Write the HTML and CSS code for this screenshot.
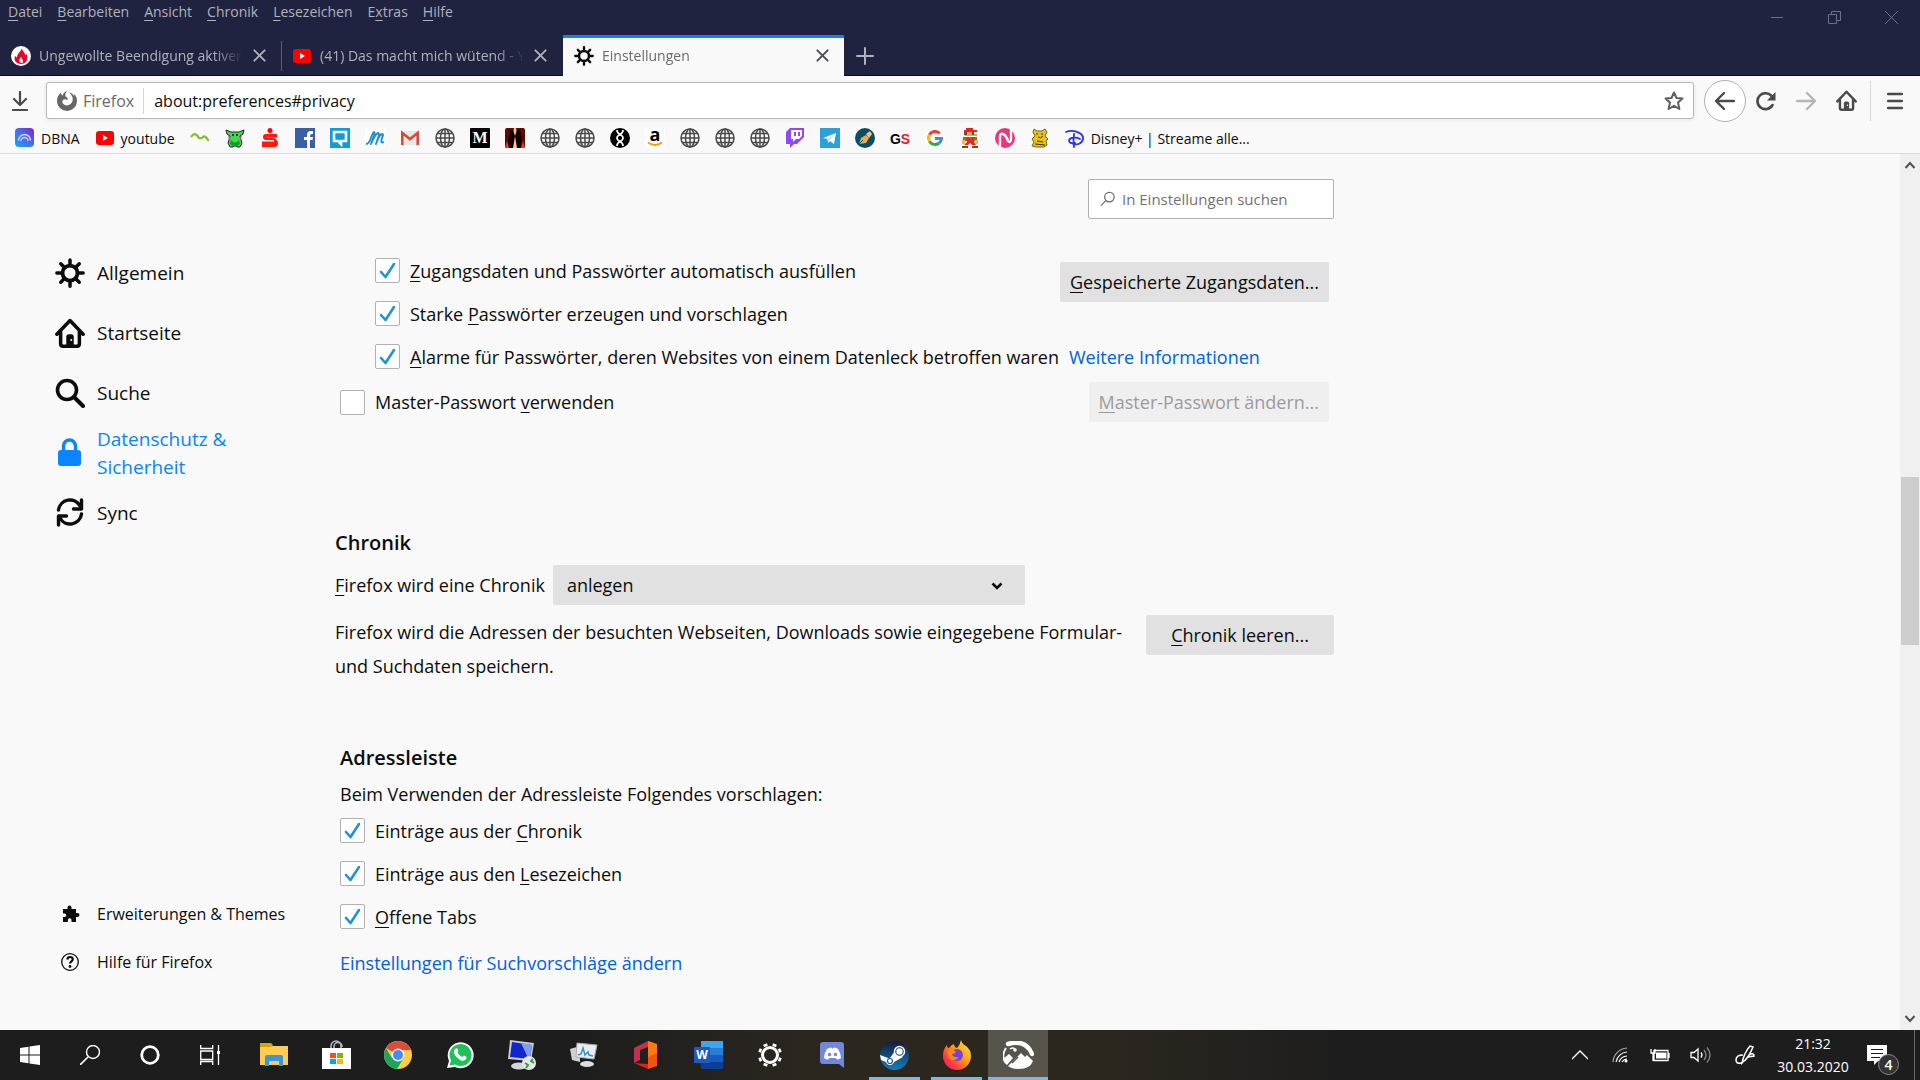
FILE: index.html
```html
<!DOCTYPE html>
<html lang="de">
<head>
    <meta charset="UTF-8">
    <meta name="viewport" content="width=device-width, initial-scale=1.0">
    <title>Einstellungen</title>
    <link rel="stylesheet" href="styles.css">
</head>
<body>

    <!-- Shared icons -->
    <svg class="sprite" width="0" height="0">
        <symbol id="gear" viewBox="0 0 24 24">
            <circle cx="12" cy="12" r="6" fill="none" stroke="currentColor" stroke-width="3"/>
            <path d="M12 1.500V6M12 18v4.500M1.500 12H6M18 12h4.500M4.600 4.600l3 3M16.400 16.400l3 3M19.400 4.600l-3 3M7.600 16.400l-3 3" stroke="currentColor" stroke-width="2.800" stroke-linecap="round"/>
        </symbol>
        <symbol id="house" viewBox="0 0 24 24">
            <path d="M1.500 13L12 2l10.500 11M4.500 11v9.500q0 2 2 2h11q2 0 2-2V11" fill="none" stroke="currentColor" stroke-width="2.800" stroke-linecap="round" stroke-linejoin="round"/>
            <path d="M9 22v-7q0-2 2-2h2q2 0 2 2v7z" fill="currentColor"/>
            <circle cx="13" cy="17.500" r=".8" fill="#fff"/>
        </symbol>
        <symbol id="globe" viewBox="0 0 20 20">
            <g fill="none" stroke="#4a4a4a" stroke-width="1.500">
                <circle cx="10" cy="10" r="9"/>
                <ellipse cx="10" cy="10" rx="4.500" ry="9"/>
                <path d="M10 1v18M1 10h18M2.500 5.500h15M2.500 14.500h15"/>
            </g>
        </symbol>
        <symbol id="tube" viewBox="0 0 20 20">
            <rect x="1" y="3" width="18" height="14" rx="3" fill="#f00"/>
            <path d="M8 7l5 3-5 3z" fill="#fff"/>
        </symbol>
        <symbol id="cross" viewBox="0 0 16 16">
            <path d="M2.500 2.500l11 11M13.500 2.500l-11 11" stroke="currentColor" stroke-width="2" stroke-linecap="round"/>
        </symbol>
    </svg>

    <header class="titlebar">
        <div class="menu-row">
            <nav class="menu">
                <a href="#"><u>D</u>atei</a>
                <a href="#"><u>B</u>earbeiten</a>
                <a href="#"><u>A</u>nsicht</a>
                <a href="#"><u>C</u>hronik</a>
                <a href="#"><u>L</u>esezeichen</a>
                <a href="#">E<u>x</u>tras</a>
                <a href="#"><u>H</u>ilfe</a>
            </nav>
            <div class="window-buttons">
                <button aria-label="Minimieren"><svg width="13" height="13" viewBox="0 0 13 13"><path d="M0 6.500h12" stroke="currentColor"/></svg></button>
                <button aria-label="Verkleinern"><svg width="13" height="13" viewBox="0 0 13 13"><path d="M.5 3.500h8v9h-8zM3.500 3.500v-3h9v9h-4" fill="none" stroke="currentColor"/></svg></button>
                <button aria-label="Beenden"><svg width="13" height="13" viewBox="0 0 13 13"><path d="M0 0l13 13M13 0L0 13" stroke="currentColor"/></svg></button>
            </div>
        </div>
        <div class="tabs">
            <div class="tab">
                <svg width="20" height="20" viewBox="0 0 20 20"><circle cx="10" cy="10" r="10" fill="#fff"/><path d="M10 18C5 18 2.500 14 4 10l2 1.500C6 8 9 6 11 2.500c.5 3 3.500 4 3 7l1.500-1.500c2.500 5-.5 10-5.500 10z" fill="#e2062c"/><path d="M10 17c-2-1-2.500-4 .5-6 0 2 2.500 3 1 6z" fill="#fff"/></svg>
                <span class="tab-title">Ungewollte Beendigung aktiver</span>
                <button class="tab-close" aria-label="Tab schließen"><svg width="15" height="15"><use href="#cross"/></svg></button>
            </div>
            <div class="tab tab-divided">
                <svg width="20" height="20"><use href="#tube"/></svg>
                <span class="tab-title">(41) Das macht mich wütend - Y</span>
                <button class="tab-close" aria-label="Tab schließen"><svg width="15" height="15"><use href="#cross"/></svg></button>
            </div>
            <div class="tab tab-active">
                <svg width="20" height="20"><use href="#gear"/></svg>
                <span class="tab-title">Einstellungen</span>
                <button class="tab-close" aria-label="Tab schließen"><svg width="15" height="15"><use href="#cross"/></svg></button>
            </div>
            <button class="new-tab" aria-label="Neuer Tab"><svg width="18" height="18" viewBox="0 0 18 18"><path d="M9 1v16M1 9h16" stroke="currentColor" stroke-width="2" stroke-linecap="round"/></svg></button>
        </div>
    </header>

    <div class="toolbar">
        <button class="tool" aria-label="Downloads"><svg width="20" height="20" viewBox="0 0 20 20"><path d="M10 1v12M4 8l6 6 6-6M3 19h14" fill="none" stroke="#4a4a4a" stroke-width="2.200" stroke-linecap="round" stroke-linejoin="round"/></svg></button>
        <div class="url-bar">
            <span class="identity">
                <svg width="20" height="20" viewBox="0 0 20 20"><path d="M10 0C7 1 6 2.500 6 4.500 4.500 4 4 3 4 1.500 1.500 3.500 0 6.500 0 10a10 10 0 0 0 20 0c0-3-1-5.500-3-7l.3 2.500C16 3 14 1.500 12 1.500c2.500 2 4.500 5 3.500 8.500-1 4-5.500 5.500-8.500 3.500-2.500-1.800-2-4.500 0-5 1.500-.5 3 .5 4 0-.2-1.500-1-2.500-2.500-3C8 3.500 8.500 1.500 10 0z" fill="#666"/></svg>
                Firefox
            </span>
            <input type="text" class="url-input" aria-label="Adresse" value="about:preferences#privacy">
            <button class="star" aria-label="Lesezeichen setzen"><svg width="20" height="20" viewBox="0 0 20 20"><path d="M10 1.500l2.500 5.500 6 .6-4.500 4 1.400 6.400L10 14.800 4.600 18 6 11.600l-4.500-4 6-.6z" fill="none" stroke="#5e5e5e" stroke-width="2" stroke-linejoin="round"/></svg></button>
        </div>
        <button class="back" aria-label="Zurück"><svg width="20" height="20" viewBox="0 0 20 20"><path d="M19 10H2M9 2l-8 8 8 8" fill="none" stroke="#4a4a4a" stroke-width="2.400" stroke-linecap="round" stroke-linejoin="round"/></svg></button>
        <button class="tool" aria-label="Neu laden"><svg width="20" height="20" viewBox="0 0 20 20"><path d="M16.500 14A8 8 0 1 1 16 5.500" fill="none" stroke="#4a4a4a" stroke-width="2.600" stroke-linecap="round"/><path d="M19.500 1v8.500H11z" fill="#4a4a4a"/></svg></button>
        <button class="tool" aria-label="Vor"><svg width="20" height="20" viewBox="0 0 20 20"><path d="M1 10h17M11 2l8 8-8 8" fill="none" stroke="#b5b5b5" stroke-width="2.400" stroke-linecap="round" stroke-linejoin="round"/></svg></button>
        <button class="tool" aria-label="Startseite"><svg width="21" height="21"><use href="#house"/></svg></button>
        <button class="tool app-menu" aria-label="Menü"><svg width="16" height="18" viewBox="0 0 16 18"><path d="M1 2h14M1 9h14M1 16h14" stroke="#4a4a4a" stroke-width="2.400" stroke-linecap="round"/></svg></button>
    </div>

    <nav class="bookmarks">
        <a href="#"><svg viewBox="0 0 20 20"><defs><linearGradient id="dbna" x1="0" y1="1" x2="1" y2="0"><stop offset="0" stop-color="#12a5f4"/><stop offset=".5" stop-color="#4a6cf0"/><stop offset="1" stop-color="#7d22c9"/></linearGradient></defs><rect width="19" height="19" rx="4" fill="url(#dbna)"/><path d="M3.500 12.500a6 6 0 0 1 12 0M6 13a3.500 3.500 0 0 1 7 0" fill="none" stroke="#cfd4ff" stroke-width="1.500"/></svg>DBNA</a>
        <a href="#"><svg viewBox="0 0 20 20"><use href="#tube"/></svg>youtube</a>
        <a href="#" aria-label="Lesezeichen"><svg viewBox="0 0 20 20"><path d="M1 9q3-4 5-2.500T9 10q2 1 4-1t5 3v1" fill="none" stroke="#86bc25" stroke-width="2.200"/></svg></a>
        <a href="#" aria-label="Lesezeichen"><svg viewBox="0 0 20 20"><path d="M1 2l5 2h8l5-2-1 4-3 2 1 4 1 3-2 4h-3l-1-1H9l-1 1H5l-2-4 1-3 1-4-3-2z" fill="#3edc4a" stroke="#222"/><path d="M3 8l3 2-2 2zM17 8l-3 2 2 2z" fill="#ee3fd0"/><path d="M7 6h2v2H7zM11 6h2v2h-2z" fill="#184f1c"/><path d="M6 12q4 5 8 0l1 4-3 2H8l-3-2z" fill="#139a2a"/></svg></a>
        <a href="#" aria-label="Sparkasse"><svg viewBox="0 0 20 20"><circle cx="10" cy="2.500" r="2.500" fill="#f00"/><path d="M17 6H6Q3 6 3 9t3 3h8v1.500H2V19h12q4 0 4-3.500T14 10H7V9.500h10z" fill="#ff1a0a"/></svg></a>
        <a href="#" aria-label="Facebook"><svg viewBox="0 0 20 20"><rect width="20" height="20" fill="#3b5fa5"/><path d="M12 20v-8H9V9h3V7q0-4 4-4h2v3h-1q-2 0-2 2v1h3l-.5 3H15v8z" fill="#fff"/></svg></a>
        <a href="#" aria-label="Lesezeichen"><svg viewBox="0 0 20 20"><rect width="20" height="20" fill="#0d9ddb"/><path d="M4 4h12v9h-5v3l-3-3H4z" fill="none" stroke="#fff" stroke-width="2.600"/></svg></a>
        <a href="#" aria-label="Lesezeichen"><svg viewBox="0 0 20 20"><rect width="20" height="20" fill="#fff"/><path d="M1 16q3 0 5-6t3-6q1 0 0 4l-3 8q4-10 7-11 2 0 0 5l-2 6q3-9 6-10 2 0 0 4-2 6 2 4" fill="none" stroke="#1c8fd0" stroke-width="1.900" stroke-linejoin="round"/></svg></a>
        <a href="#" aria-label="Gmail"><svg viewBox="0 0 20 20"><rect x="1" y="3" width="18" height="14" rx="1" fill="#e8e8e8"/><path d="M2.300 17V5l7.700 6 7.700-6v12" fill="none" stroke="#d54b3d" stroke-width="2.600"/></svg></a>
        <a href="#" aria-label="Lesezeichen"><svg><use href="#globe"/></svg></a>
        <a href="#" aria-label="Lesezeichen"><svg viewBox="0 0 20 20"><rect width="20" height="20" rx="1" fill="#000"/><text x="10" y="15" class="serif-m">M</text></svg></a>
        <a href="#" aria-label="Lesezeichen"><svg viewBox="0 0 20 20"><rect width="20" height="20" rx="2" fill="#5a0d05"/><path d="M9 0h2l4 20H5z" fill="#ffc68b"/><path d="M5 2h3l2 6-1 6-1 6H4l-1-8zM12 2h3l2 9-1 9h-4l-1-6-1-6z" fill="#100"/><path d="M0 20l2-7 2 7zM16 20l2-7 2 7z" fill="#f32"/></svg></a>
        <a href="#" aria-label="Lesezeichen"><svg><use href="#globe"/></svg></a>
        <a href="#" aria-label="Lesezeichen"><svg><use href="#globe"/></svg></a>
        <a href="#" aria-label="Lesezeichen"><svg viewBox="0 0 20 20"><circle cx="10" cy="10" r="10" fill="#000"/><path d="M7 2q0 3 3 4.500T13 10t-3 3.500T7 18M13 2q0 3-3 4.500T7 10t3 3.500 3 4.500" fill="none" stroke="#fff" stroke-width="1.700"/></svg></a>
        <a href="#" aria-label="Amazon"><svg viewBox="0 0 20 20"><rect width="20" height="20" rx="3" fill="#fff"/><text x="10" y="13" class="bold-a">a</text><path d="M3 14.500q7 5 14 0" fill="none" stroke="#f90" stroke-width="1.800"/></svg></a>
        <a href="#" aria-label="Lesezeichen"><svg><use href="#globe"/></svg></a>
        <a href="#" aria-label="Lesezeichen"><svg><use href="#globe"/></svg></a>
        <a href="#" aria-label="Lesezeichen"><svg><use href="#globe"/></svg></a>
        <a href="#" aria-label="Twitch"><svg viewBox="0 0 20 20"><path d="M5 0L1 4v12h4v4l4-4h3l7-7V0z" fill="#9146ff"/><path d="M6 2h11v6l-3 3h-3l-3 3v-3H6z" fill="#fff"/><path d="M10 4v4M14 4v4" stroke="#9146ff" stroke-width="2"/></svg></a>
        <a href="#" aria-label="Telegram"><svg viewBox="0 0 20 20"><rect width="20" height="20" fill="#2aa1da"/><path d="M3 10l13-5-2 11-4-3-2 2-.5-4z" fill="#fff"/><path d="M7.500 11L14 7l-5 6" fill="#c8dcea"/></svg></a>
        <a href="#" aria-label="Lesezeichen"><svg viewBox="0 0 20 20"><circle cx="10" cy="10" r="10" fill="#0b4d63"/><path d="M4 16l2-6 5-3 3 3-3 5z" fill="#f0a94c"/><path d="M11 6l4-3 2 3-3 4z" fill="#f7c67c"/><path d="M4 16l4-4" stroke="#0b4d63"/></svg></a>
        <a href="#" aria-label="GameStar"><svg viewBox="0 0 20 20"><text x="10" y="16" class="gs">G<tspan fill="#f0142d">S</tspan></text></svg></a>
        <a href="#" aria-label="Google"><svg viewBox="0 0 20 20"><circle cx="10" cy="10" r="10" fill="#fff"/><g fill="none" stroke-width="3"><path d="M14.600 5.400A6.500 6.500 0 0 0 4.400 6.800" stroke="#ea4335"/><path d="M4.400 6.800a6.500 6.500 0 0 0 0 6.400" stroke="#fbbc05"/><path d="M4.400 13.200a6.500 6.500 0 0 0 9.800 1.800" stroke="#34a853"/><path d="M14.200 15a6.500 6.500 0 0 0 2.300-4.500H10" stroke="#4285f4"/></g></svg></a>
        <a href="#" aria-label="Mario"><svg viewBox="0 0 20 20"><path d="M6 0h7v2h4v2H4V2h2z" fill="#e52521"/><path d="M4 4h10v2h3v2H5z" fill="#e9a35b"/><path d="M4 4h3v3H4zM12 4h2v3h-2z" fill="#7b4a12"/><path d="M3 9h14v4H3z" fill="#9b6a1a"/><path d="M7 9h2v2h3V9h2v5l2 3h-4l-2-2-2 2H4l3-3z" fill="#e52521"/><path d="M2 12h3v4H2zM15 12h3v4h-3z" fill="#f0b36b"/><path d="M2 18h6v2H2zM12 18h6v2h-6z" fill="#7b4a12"/></svg></a>
        <a href="#" aria-label="Lesezeichen"><svg viewBox="0 0 20 20"><circle cx="10" cy="10" r="10" fill="#e8387b"/><path d="M5 20V9q0-4 3-3t5 7q3 3 3-3V0" fill="none" stroke="#fff" stroke-width="2.400"/></svg></a>
        <a href="#" aria-label="Lesezeichen"><svg viewBox="0 0 20 20"><path d="M4 1l3 2h5l3-2 2 3-2 4 3 3-2 2 1 4-3 2H6l-4-1 2-4-2-3 3-3-2-4z" fill="#e8c21c" stroke="#7c650c"/><path d="M7 5v2M12 5v2M8 9q3 2 5-1M7 13l6 1M5 16l10 1" stroke="#3d3106" fill="none"/></svg></a>
        <a href="#"><svg viewBox="0 0 20 20"><path d="M1 4C8 1 19 5 18 11c-1 5-6 6-10 5M9 6q-1 6 0 13M4 13c0-4 8-4 11-2M4 13q1 3 6 2" fill="none" stroke="#2b32f0" stroke-width="1.800" stroke-linecap="round"/></svg>Disney+ | Streame alle...</a>
    </nav>

    <div class="content">
        <aside class="sidebar">
            <nav class="categories">
                <a href="#" class="category"><svg width="30" height="30"><use href="#gear"/></svg>Allgemein</a>
                <a href="#" class="category"><svg width="30" height="30"><use href="#house"/></svg>Startseite</a>
                <a href="#" class="category"><svg width="30" height="30" viewBox="0 0 30 30"><circle cx="12" cy="12" r="9.500" fill="none" stroke="currentColor" stroke-width="3.600"/><path d="M19 19l9 9" stroke="currentColor" stroke-width="4" stroke-linecap="round"/></svg>Suche</a>
                <a href="#" class="category selected"><svg width="30" height="30" viewBox="0 0 30 30"><rect x="3" y="12" width="23" height="16" rx="3" fill="currentColor"/><path d="M8.500 13V8a6 6 0 0 1 12 0v5" fill="none" stroke="currentColor" stroke-width="3.400"/></svg>Datenschutz &amp; Sicherheit</a>
                <a href="#" class="category"><svg width="30" height="30" viewBox="0 0 30 30"><path d="M3.500 12A11.500 11.500 0 0 1 25 8M26.500 16A11.500 11.500 0 0 1 5 20" fill="none" stroke="currentColor" stroke-width="3.400" stroke-linecap="round"/><path d="M26.500 2v9h-8M3.500 27v-9h8" fill="none" stroke="currentColor" stroke-width="3.400" stroke-linejoin="round" stroke-linecap="round"/></svg>Sync</a>
            </nav>
            <nav class="side-links">
                <a href="#"><svg width="20" height="20" viewBox="0 0 20 20"><path d="M3 5h4.500V3.500a2 2 0 1 1 4 0V5H16v4h1.500a2 2 0 1 1 0 4H16v5h-4.500v-2a1.800 1.800 0 0 0-3.600 0v2H3v-5h1.500a1.800 1.800 0 0 0 0-3.600H3z" fill="#0c0c0d"/></svg>Erweiterungen &amp; Themes</a>
                <a href="#"><svg width="20" height="20" viewBox="0 0 20 20"><circle cx="10" cy="10" r="8.300" fill="none" stroke="#0c0c0d" stroke-width="1.300"/><path d="M7.300 7.500q.3-2.500 2.800-2.500t2.700 2.300c0 2-2.800 2-2.800 4.200" fill="none" stroke="#0c0c0d" stroke-width="2.200"/><circle cx="10" cy="14.500" r="1.400" fill="#0c0c0d"/></svg>Hilfe für Firefox</a>
            </nav>
        </aside>

        <main class="pane">
            <div class="search-row">
                <div class="search-box">
                    <svg width="17" height="18" viewBox="0 0 18 18"><circle cx="11" cy="7" r="5" fill="none" stroke="#6a6a6a" stroke-width="1.300"/><path d="M7 11l-5 5" stroke="#6a6a6a" stroke-width="1.300"/></svg>
                    <input type="text" aria-label="Suchen" placeholder="In Einstellungen suchen">
                </div>
            </div>

            <section class="passwords">
                <div class="split">
                    <div class="indent">
                        <label class="check"><input type="checkbox" checked><span><u>Z</u>ugangsdaten und Passwörter automatisch ausfüllen</span></label>
                        <label class="check"><input type="checkbox" checked><span>Starke <u>P</u>asswörter erzeugen und vorschlagen</span></label>
                    </div>
                    <button class="button saved-logins"><u>G</u>espeicherte Zugangsdaten...</button>
                </div>
                <div class="indent breach">
                    <label class="check"><input type="checkbox" checked><span><u>A</u>larme für Passwörter, deren Websites von einem Datenleck betroffen waren</span></label>
                    <a href="#" class="link">Weitere Informationen</a>
                </div>
                <div class="split master">
                    <label class="check"><input type="checkbox"><span>Master-Passwort <u>v</u>erwenden</span></label>
                    <button class="button" disabled><u>M</u>aster-Passwort ändern...</button>
                </div>
            </section>

            <section class="history">
                <h2>Chronik</h2>
                <div class="history-mode">
                    <label for="history-mode"><u>F</u>irefox wird eine Chronik</label>
                    <div class="select-wrap">
                        <select id="history-mode">
                            <option>anlegen</option>
                            <option>niemals anlegen</option>
                            <option>nach benutzerdefinierten Einstellungen anlegen</option>
                        </select>
                        <svg class="select-arrow" width="12" height="10" viewBox="0 0 12 10"><path d="M1.500 2.500L6 7l4.500-4.500" fill="none" stroke="#0c0c0d" stroke-width="2.600"/></svg>
                    </div>
                </div>
                <div class="split history-info">
                    <p>Firefox wird die Adressen der besuchten Webseiten, Downloads sowie eingegebene Formular- und Suchdaten speichern.</p>
                    <button class="button wide"><u>C</u>hronik leeren...</button>
                </div>
            </section>

            <section class="address">
                <h2>Adressleiste</h2>
                <p>Beim Verwenden der Adressleiste Folgendes vorschlagen:</p>
                <label class="check"><input type="checkbox" checked><span>Einträge aus der <u>C</u>hronik</span></label>
                <label class="check"><input type="checkbox" checked><span>Einträge aus den <u>L</u>esezeichen</span></label>
                <label class="check"><input type="checkbox" checked><span><u>O</u>ffene Tabs</span></label>
                <a href="#" class="link">Einstellungen für Suchvorschläge ändern</a>
            </section>
        </main>

        <div class="scrollbar">
            <svg width="12" height="10" viewBox="0 0 12 10"><path d="M1.500 8L6 3l4.500 5" fill="none" stroke="#505050" stroke-width="2"/></svg>
            <div class="track"><div class="thumb"></div></div>
            <svg width="12" height="10" viewBox="0 0 12 10"><path d="M1.500 2L6 7l4.500-5" fill="none" stroke="#505050" stroke-width="2"/></svg>
        </div>
    </div>

    <footer class="taskbar">
        <div class="system">
            <button aria-label="Start"><svg width="20" height="20" viewBox="0 0 20 20"><path d="M0 3l8.500-1.200V9.500H0zM9.500 1.600L20 0v9.500H9.500zM0 10.500h8.500v7.800L0 17zM9.500 10.500H20V20L9.500 18.500z" fill="#fff"/></svg></button>
            <button aria-label="Suche"><svg width="20" height="20" viewBox="0 0 20 20"><circle cx="13" cy="7" r="6.500" fill="none" stroke="#fff" stroke-width="1.400"/><path d="M8 12l-8 8" stroke="#fff" stroke-width="1.600"/></svg></button>
            <button aria-label="Cortana"><svg width="20" height="20" viewBox="0 0 20 20"><circle cx="10" cy="10" r="8.300" fill="none" stroke="#fff" stroke-width="2.800"/></svg></button>
            <button aria-label="Taskansicht"><svg width="20" height="20" viewBox="0 0 20 20"><path d="M.7 0v3.500h12V0M.7 6h12v8.500H.7zM.7 20v-3.500h12V20M18.500 0v20" fill="none" stroke="#fff" stroke-width="1.300"/><path d="M17 6h3v3h-3z" fill="#fff"/></svg></button>
        </div>
        <div class="apps">
            <button aria-label="Explorer"><svg width="28" height="28" viewBox="0 0 28 28"><path d="M0 4h11l2 1h15v19H0z" fill="#fc5"/><path d="M0 2h11l2 2-2 2H0z" fill="#e0a000"/><path d="M5 25V16q0-2 2-2h14q2 0 2 2v9h-4v-5h-10v5z" fill="#3a96dd"/></svg></button>
            <button aria-label="Store"><svg width="29" height="30" viewBox="0 0 29 30"><path d="M9 8V6a5 5 0 0 1 10 0v2M12 8V6a4 4 0 0 1 8 1" fill="none" stroke="#bbb" stroke-width="1.500"/><path d="M0 8h29v21H0z" fill="#fff"/><path d="M8 13h6v5H8z" fill="#f25022"/><path d="M15 13h6v5h-6z" fill="#7fba00"/><path d="M8 19h6v5H8z" fill="#00a4ef"/><path d="M15 19h6v5h-6z" fill="#ffb900"/></svg></button>
            <button aria-label="Chrome"><svg width="28" height="28" viewBox="0 0 28 28"><circle cx="14" cy="14" r="14" fill="#ffcd42"/><path d="M14 14L1.900 7A14 14 0 0 1 26.100 7L27 9H14z" fill="#dd4b3e"/><path d="M1.900 7A14 14 0 0 0 13 28l6.500-11L8 17z" fill="#1da462"/><circle cx="14" cy="14" r="6.500" fill="#f1f1f1"/><circle cx="14" cy="14" r="5" fill="#4a8af4"/></svg></button>
            <button aria-label="WhatsApp"><svg width="28" height="28" viewBox="0 0 28 28"><path d="M1 27l2-7A13 13 0 1 1 9 26z" fill="#fff"/><path d="M3.500 24.500l1.500-5A11 11 0 1 1 9 23.500z" fill="#21c15a"/><path d="M9 8q2-2 3.500 1.500l-1 2q1.500 3 4.500 4.500l2-1.500q3 1 2.500 2.500-1.500 4-6 2.200Q10 17 8 12.500q-.8-2.500 1-4.500z" fill="#fff"/></svg></button>
            <button aria-label="Remotedesktop"><svg width="30" height="30" viewBox="0 0 30 30"><path d="M3 0l24 3-3 18-23-2z" fill="#ccc"/><path d="M5 2l20 3-2 14-20-2z" fill="#1226d0"/><path d="M14 3l11 2-2 14-2-1z" fill="#7f9df2"/><ellipse cx="12" cy="26" rx="8" ry="3.500" fill="#d5d5d5"/><circle cx="22" cy="23" r="7" fill="#e8e8e8"/><path d="M18 23l3 2-2 3M26 19l-2 2 3 2" fill="none" stroke="#2fa04a" stroke-width="2"/></svg></button>
            <button aria-label="Ressourcenmonitor"><svg width="28" height="26" viewBox="0 0 28 26"><path d="M0 7l10-3v16L2 18z" fill="#d0d0d0"/><path d="M7 1l20 2-3 14-18-2z" fill="#e9edf0" stroke="#aaa"/><path d="M8 13l3-1 2-6 2 7 3-3 1 3 4 1" fill="none" stroke="#3a93c9" stroke-width="1.500"/><ellipse cx="17" cy="22" rx="7" ry="3" fill="#ddd"/></svg></button>
            <button aria-label="Office"><svg width="24" height="28" viewBox="0 0 24 28"><path d="M0 7L14 0v6L6 9v10l-6 3z" fill="#c2314f"/><path d="M14 0l9 3v22l-9 3z" fill="#f2560e"/><path d="M14 0l9 3v9l-9 4z" fill="#ff8a12" opacity=".7"/><path d="M0 22l14 1v5z" fill="#e01f1f"/></svg></button>
            <button aria-label="Word"><svg width="29" height="28" viewBox="0 0 29 28"><path d="M7 0h22v7H7z" fill="#41a5ee"/><path d="M7 7h22v7H7z" fill="#2b7cd3"/><path d="M7 14h22v7H7z" fill="#185abd"/><path d="M7 21h22v7H7z" fill="#103f91"/><rect y="6" width="16" height="16" rx="1" fill="#1d5bbd"/><text x="8" y="18" class="word-w">W</text></svg></button>
            <button aria-label="Einstellungen"><svg width="24" height="24" viewBox="0 0 24 24"><circle cx="12" cy="12" r="7.500" fill="none" stroke="#fff" stroke-width="3"/><path d="M8 3.500L7 1M16 3.500L17 1M8 20.500L7 23M16 20.500l1 2.500M3.500 8L1 7M3.500 16L1 17M20.500 8L23 7M20.500 16l2.500 1" stroke="#fff" stroke-width="4"/></svg></button>
            <button aria-label="Discord"><svg width="25" height="26" viewBox="0 0 25 26"><path d="M3 0h18q3 0 3 3v23l-5-4H3q-3 0-3-3V3q0-3 3-3z" fill="#7289da"/><path d="M4 16q0-5 3-9 2-1.500 4-1.500l1 1h1l1-1q3 0 4 1.500 3 4 3 9-2 1.500-4 1.500l-1.500-1.500h-6L8 17.500q-2 0-4-1.500z" fill="#fff"/><circle cx="9.500" cy="12.500" r="1.800" fill="#7289da"/><circle cx="15.500" cy="12.500" r="1.800" fill="#7289da"/></svg></button>
            <button class="running" aria-label="Steam"><svg width="29" height="29" viewBox="0 0 29 29"><defs><linearGradient id="steam" x1="0" y1="0" x2="0" y2="1"><stop offset="0" stop-color="#16193c"/><stop offset="1" stop-color="#137fb8"/></linearGradient></defs><circle cx="14.500" cy="14.500" r="14.500" fill="url(#steam)"/><path d="M0 14l8 3 2 0 5-7 8 6-9 5q-1 3-4 3t-4-3l-5-2z" fill="#fff"/><circle cx="19.500" cy="10.500" r="5" fill="#1a3a68" stroke="#fff" stroke-width="1.500"/><circle cx="19.500" cy="10.500" r="3.200" fill="#fff"/><circle cx="10" cy="20" r="2.500" fill="none" stroke="#1a5a90" stroke-width="1.200"/></svg></button>
            <button class="running" aria-label="Firefox"><svg width="29" height="30" viewBox="0 0 29 30"><defs><linearGradient id="fox" x1="1" y1="0" x2="0" y2="1"><stop offset="0" stop-color="#fff44f"/><stop offset=".45" stop-color="#ff980e"/><stop offset=".75" stop-color="#ff3647"/><stop offset="1" stop-color="#e31587"/></linearGradient></defs><path d="M19 0q1 4 5 6 5 4 5 10a14 14 0 1 1-28 0Q1 9 5 5q0 3 2 3 2-3 5-4 0 3 3 4 3-3 4-8z" fill="url(#fox)"/><circle cx="15" cy="15" r="6" fill="#7a3fd8"/><path d="M6 11q4-3 8 1-1 2-4 2 1 4 7 3-5 6-10 1-2-4-1-7z" fill="#ff8a16"/></svg></button>
            <button class="running active" aria-label="Bildbearbeitung"><svg width="31" height="29" viewBox="0 0 31 29"><path d="M5 3Q23-2 29 13" fill="none" stroke="#fff" stroke-width="4.500" stroke-linecap="round"/><path d="M3 7q-4 6-2 11" fill="none" stroke="#fff" stroke-width="1.800"/><path d="M0 18l6-5 4 4-6 7q-4-3-4-6z" fill="#fff"/><path d="M5 25L18 12l4 4 2-2 6 6q-3 8-14 8-7 0-11-3z" fill="#fff"/><path d="M9 22l6-6" stroke="#57544c" stroke-width="1.500"/><path d="M7 8q3-2 5 0" fill="none" stroke="#fff" stroke-width="1.500"/><circle cx="12" cy="9" r="1.800" fill="#fff"/></svg></button>
        </div>
        <div class="tray">
            <button aria-label="Ausgeblendete Symbole"><svg width="16" height="10" viewBox="0 0 16 10"><path d="M0 9l8-8 8 8" fill="none" stroke="#fff" stroke-width="1.400"/></svg></button>
            <button aria-label="WLAN"><svg width="16" height="16" viewBox="0 0 16 16"><g fill="none" stroke="#fff" stroke-width="1.200"><path d="M1 15A15 15 0 0 1 15 1" opacity=".6"/><path d="M4 15A12 12 0 0 1 15 5M7 15a9 9 0 0 1 8-6M10 15a6 6 0 0 1 5-3"/></g><circle cx="14" cy="14" r="1.500" fill="#fff"/></svg></button>
            <button aria-label="Akku"><svg width="20" height="14" viewBox="0 0 20 14"><path d="M4 2.500h14v10H4zM19 5v5M1 1v4h4V1M3 5v8" fill="none" stroke="#fff" stroke-width="1.300"/><path d="M6 4.500h10.500v6H6z" fill="#fff"/></svg></button>
            <button aria-label="Lautstärke"><svg width="21" height="18" viewBox="0 0 21 18"><path d="M1 6.500h3L8 3v12l-4-3.500H1z" fill="none" stroke="#fff" stroke-width="1.300"/><path d="M11 6.500q2 2.500 0 5" fill="none" stroke="#fff" stroke-width="1.300"/><path d="M14 4q4 5 0 10M17 1.500q6 7.500 0 15" fill="none" stroke="#888" stroke-width="1.300"/></svg></button>
            <button class="pen" aria-label="Windows Ink"><svg width="20" height="20" viewBox="0 0 20 20"><path d="M7 18Q9 8 15 1l3 1Q14 12 8 17zM8 10q-7 0-7 5 0 4 5 3 4-2 7-6l6-1q0-4-5-1" fill="none" stroke="#fff" stroke-width="1.500"/></svg></button>
            <div class="clock"><time>21:32</time><time>30.03.2020</time></div>
            <button class="notifications" aria-label="Benachrichtigungen"><svg width="20" height="20" viewBox="0 0 20 20"><path d="M0 0h20v16h-9l-4 4v-4H0z" fill="#fff"/><path d="M4 4.500h12M4 8.500h12M4 12.500h9" stroke="#1d1d1d" stroke-width="1.200"/></svg><span class="badge">4</span></button>
        </div>
    </footer>

</body>
</html>
```
FILE: styles.css
```css
* {
    box-sizing: border-box;
}

body {
    display: flex;
    flex-direction: column;
    min-height: 100vh;
    margin: 0;
    font-family: "Open Sans", "Noto Sans", sans-serif;
    font-size: 18px;
    color: #0c0c0d;
    background-color: #f9f9fa;
}

a {
    color: inherit;
    text-decoration: none;
}

u {
    text-underline-offset: 3px;
    text-decoration-thickness: 1px;
}

button,
input,
select {
    font: inherit;
    color: inherit;
}

button {
    display: flex;
    align-items: center;
    justify-content: center;
    padding: 0;
    border: none;
    background: none;
}

svg {
    flex-shrink: 0;
}

.sprite {
    position: absolute;
}

/* Title bar and tabs */
.titlebar {
    height: 76px;
    color: #b1b1b9;
    background-color: #202340;
    border-bottom: 1px solid #0f0a2a;
    font-size: 14px;
}

.menu-row {
    display: flex;
    justify-content: space-between;
    height: 35px;
}

.menu {
    display: flex;
    gap: 15px;
    padding-left: 8px;
    line-height: 24px;
}

.window-buttons {
    display: flex;
    color: #6d6f83;
}

.window-buttons button {
    width: 57px;
    height: 34px;
}

.tabs {
    display: flex;
    height: 41px;
}

.tab {
    display: flex;
    align-items: center;
    gap: 8px;
    width: 281px;
    padding: 0 14px 0 11px;
}

.tab-divided {
    background: linear-gradient(#5b5d74, #5b5d74) left center / 1px 30px no-repeat;
}

.tab-active {
    margin-left: 1px;
    padding-bottom: 3px;
    color: #0c0c0d;
    background-color: #f9f9fa;
    border-top: 3px solid #0a84ff;
}

.tab-title {
    flex: 1;
    white-space: nowrap;
    mask-image: linear-gradient(to left, transparent, #000 30px);
}

.tab-active .tab-title {
    color: #6a6a6e;
}

.tab-close {
    width: 16px;
    height: 20px;
}

.tab-active .tab-close {
    color: #4a4a4f;
}

.new-tab {
    width: 42px;
}

/* Navigation toolbar */
.toolbar {
    display: flex;
    align-items: center;
    height: 49px;
    padding-right: 2px;
    font-size: 16px;
}

.tool {
    width: 40px;
    height: 40px;
    color: #4a4a4a;
}

.url-bar {
    display: flex;
    flex: 1;
    align-items: center;
    height: 37px;
    margin: 0 10px 0 6px;
    background-color: #fff;
    border: 1px solid #b8b8b8;
    border-radius: 3px;
    box-shadow: 0 1px 4px rgba(0, 0, 0, 0.08);
}

.identity {
    display: flex;
    align-items: center;
    gap: 6px;
    height: 26px;
    padding: 0 9px 0 10px;
    color: #6a6a6a;
    border-right: 1px solid #d7d7db;
}

.url-input {
    flex: 1;
    height: 100%;
    padding: 0 10px;
    border: none;
    outline: none;
    background: none;
}

.star {
    width: 38px;
    height: 34px;
}

.back {
    width: 42px;
    height: 42px;
    background-color: #fff;
    border: 1px solid #b0b0b0;
    border-radius: 50%;
}

.app-menu {
    width: 48px;
    margin-left: 4px;
    border-left: 1px solid #d7d7db;
}

/* Bookmarks toolbar */
.bookmarks {
    display: flex;
    align-items: center;
    gap: 15px;
    height: 29px;
    padding: 0 15px 2px;
    border-bottom: 1px solid #dcdcdd;
    font-size: 14px;
}

.bookmarks a {
    display: flex;
    align-items: center;
    gap: 6px;
}

.bookmarks svg {
    width: 20px;
    height: 20px;
    overflow: visible;
}

.serif-m {
    font: bold 16px "Liberation Serif", serif;
    fill: #fff;
    text-anchor: middle;
}

.bold-a {
    font: bold 18px "Open Sans", sans-serif;
    text-anchor: middle;
}

.gs {
    font: bold 14px "Liberation Sans", sans-serif;
    text-anchor: middle;
}

/* Settings page */
.content {
    display: flex;
    flex: 1;
    line-height: 28px;
}

.sidebar {
    display: flex;
    flex-direction: column;
    justify-content: space-between;
    width: 335px;
    padding: 89px 25px 44px 55px;
}

.category {
    display: flex;
    align-items: center;
    gap: 12px;
    height: 60px;
    max-width: 200px;
    font-size: 19px;
}

.selected {
    color: #0a84ff;
}

.side-links {
    font-size: 16px;
}

.side-links a {
    display: flex;
    align-items: center;
    gap: 17px;
    height: 48px;
    padding-left: 5px;
}

.pane {
    width: 999px;
    padding-top: 25px;
}

.search-row {
    display: flex;
    justify-content: flex-end;
}

.search-box {
    display: flex;
    align-items: center;
    width: 246px;
    height: 40px;
    padding-left: 10px;
    background-color: #fff;
    border: 1px solid #b1b1b3;
    border-radius: 2px;
}

.search-box input {
    width: 200px;
    padding: 0 6px;
    border: none;
    outline: none;
    background: none;
    font-size: 15px;
}

.search-box input::placeholder {
    color: #737373;
}

h2 {
    margin: 0;
    font-size: 20px;
    font-weight: 600;
    line-height: 28px;
}

p {
    margin: 0;
}

.split {
    display: flex;
    align-items: flex-start;
    justify-content: space-between;
}

.indent {
    padding-left: 35px;
}

.check {
    display: flex;
    align-items: center;
    gap: 10px;
    width: max-content;
    height: 43px;
}

.check input {
    width: 25px;
    height: 25px;
    margin: 0;
    appearance: none;
    background-color: #fff;
    border: 1px solid #b1b1b3;
    border-radius: 2px;
}

.check input:checked {
    background: #fff url("data:image/svg+xml,%3Csvg xmlns='http://www.w3.org/2000/svg' viewBox='0 0 23 23'%3E%3Cpath d='M5 13l4.500 5L18 5' fill='none' stroke='%232292d0' stroke-width='2.600' stroke-linecap='round' stroke-linejoin='round'/%3E%3C/svg%3E");
}

.button {
    height: 40px;
    padding: 0 10px;
    background-color: #e1e1e2;
    border-radius: 2px;
}

.button:disabled {
    color: #9b9b9c;
    background-color: #efeff0;
}

.link {
    color: #0060df;
}

.passwords {
    padding: 30px 5px 0;
}

.saved-logins {
    margin-top: 13px;
}

.breach {
    display: flex;
    align-items: center;
    gap: 10px;
}

.master {
    align-items: center;
    height: 40px;
    margin-top: 4px;
}

.history {
    margin-top: 107px;
}

.history-mode {
    display: flex;
    align-items: center;
    gap: 8px;
    margin-top: 8px;
}

.select-wrap {
    position: relative;
    width: 472px;
}

.select-wrap select {
    display: block;
    width: 100%;
    height: 40px;
    padding: 0 14px;
    appearance: none;
    background-color: #e1e1e2;
    border: none;
    border-radius: 2px;
}

.select-arrow {
    position: absolute;
    top: 16px;
    right: 22px;
}

.history-info {
    gap: 15px;
    margin-top: 10px;
    line-height: 34px;
}

.wide {
    flex-shrink: 0;
    width: 188px;
}

.address {
    margin-top: 61px;
    padding-left: 5px;
}

.address p {
    margin-top: 8px;
    margin-bottom: 1px;
}

.address .link {
    display: inline-block;
    margin-top: 11px;
}

.scrollbar {
    display: flex;
    flex-direction: column;
    align-items: center;
    width: 20px;
    margin-left: auto;
    padding: 6px 0;
    background-color: #f0f0f0;
}

.track {
    flex: 1;
    width: 100%;
    padding: 307px 1px 0;
}

.thumb {
    height: 168px;
    background-color: #cdcdcd;
}

/* Taskbar */
.taskbar {
    display: flex;
    height: 50px;
    color: #fff;
    background: linear-gradient(to right, #1d1d1d 30%, #2b271f 42%, #2b271f 58%, #1d1d1d 70%);
}

.system,
.apps,
.tray {
    display: flex;
}

.system button {
    width: 60px;
}

.apps {
    gap: 2px;
    padding-left: 4px;
}

.apps button {
    width: 60px;
}

.running {
    background: linear-gradient(#76b9ed, #76b9ed) center bottom / 51px 3px no-repeat;
}

.running.active {
    background-color: #57544c;
    background-size: 100% 3px;
}

.word-w {
    font: bold 12px "Open Sans", sans-serif;
    fill: #fff;
    text-anchor: middle;
}

.tray {
    margin-left: auto;
    margin-right: 5px;
    border-right: 1px solid #6b6b6b;
}

.tray button {
    width: 40px;
}

.tray .pen {
    width: 50px;
}

.clock {
    display: flex;
    flex-direction: column;
    align-items: center;
    justify-content: center;
    width: 86px;
    font-size: 14px;
    line-height: 23px;
}

.tray .notifications {
    position: relative;
    width: 58px;
    padding-right: 17px;
}

.badge {
    position: absolute;
    top: 24px;
    right: 15px;
    width: 21px;
    height: 21px;
    border: 1px solid #8a8a8a;
    border-radius: 50%;
    background-color: #333;
    font-size: 14px;
    font-weight: 600;
    line-height: 19px;
    text-align: center;
}
```
